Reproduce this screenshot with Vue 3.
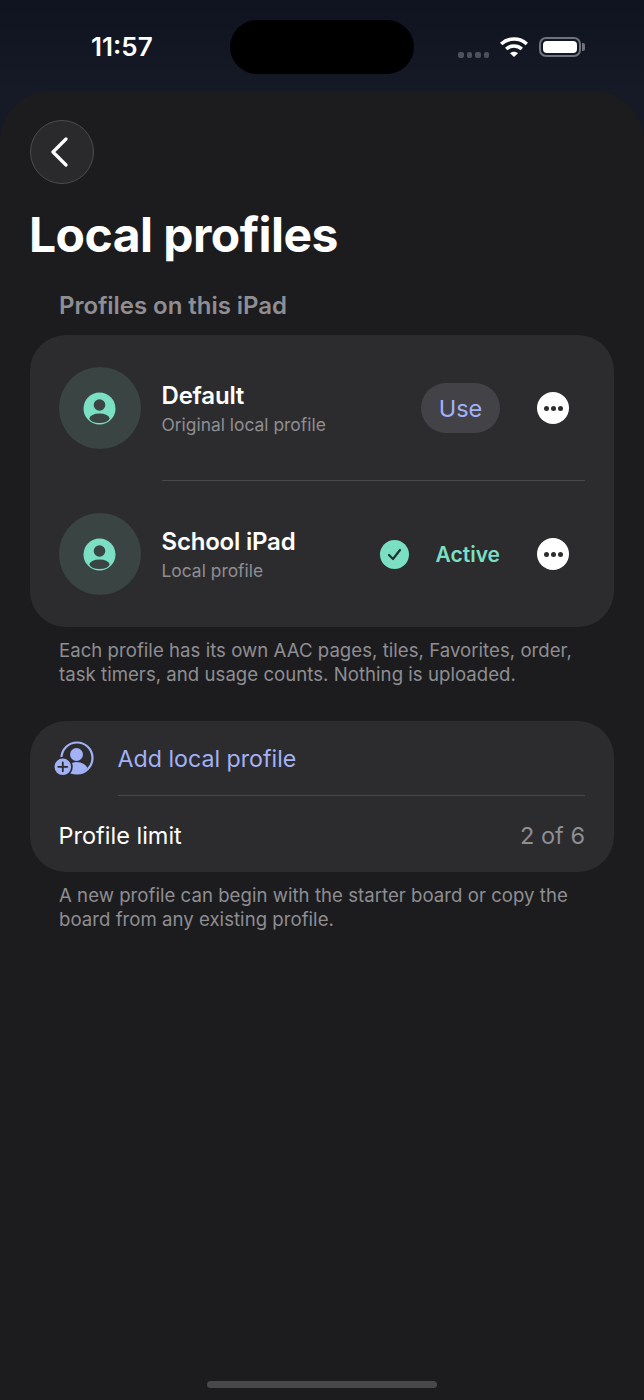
<template>
  <div class="screen">
    <div class="status-bar">
      <span class="time">11:57</span>
      <div class="island"></div>
      <div class="status-icons">
        <div class="signal"><i></i><i></i><i></i><i></i></div>
        <svg class="wifi" width="28" height="20" viewBox="0 0 28 20">
          <path d="M1.200 7C8.500 .4 19.500 .4 26.800 7" fill="none" stroke="#fff" stroke-width="3.600" />
          <path d="M6.200 12C10.700 8 17.300 8 21.800 12" fill="none" stroke="#fff" stroke-width="3.600" />
          <path d="M10 16.300c2.400-2 5.600-2 8 0l-4 3.700z" fill="#fff" />
        </svg>
        <div class="battery"><div class="battery-fill"></div></div>
        <div class="battery-cap"></div>
      </div>
    </div>

    <div class="sheet">
      <button class="back-btn">
        <svg width="22" height="30" viewBox="0 0 22 30">
          <path d="M17 2 4 15l13 13" fill="none" stroke="#fff" stroke-width="3.200" stroke-linecap="round" stroke-linejoin="round" />
        </svg>
      </button>

      <h1 class="title">Local profiles</h1>
      <div class="section-label">Profiles on this iPad</div>

      <div class="card profiles">
        <div class="profile" v-for="p in profiles" :key="p.name">
          <div class="avatar">
            <svg width="33" height="33" viewBox="0 0 33 33">
              <circle cx="16.500" cy="16.500" r="16" fill="#7adfc3" />
              <circle cx="16.500" cy="13" r="5.800" fill="#3a4443" />
              <ellipse cx="16.500" cy="26.300" rx="10" ry="4.800" fill="#3a4443" />
            </svg>
          </div>
          <div class="profile-text">
            <div class="profile-name">{{ p.name }}</div>
            <div class="profile-sub">{{ p.sub }}</div>
          </div>
          <template v-if="p.active">
            <svg class="check" width="29" height="29" viewBox="0 0 29 29">
              <circle cx="14.500" cy="14.500" r="14.500" fill="#7adfc3" />
              <path d="M9 15l4 4 7-9" fill="none" stroke="#24302e" stroke-width="2.200" stroke-linecap="round" stroke-linejoin="round" />
            </svg>
            <span class="active-label">Active</span>
          </template>
          <button v-else class="use-btn">Use</button>
          <div class="more"><i></i><i></i><i></i></div>
        </div>
      </div>
      <p class="note">Each profile has its own AAC pages, tiles, Favorites, order, task timers, and usage counts. Nothing is uploaded.</p>

      <div class="card add-card">
        <div class="add-row">
          <svg class="add-icon" width="42" height="36" viewBox="0 0 42 36">
            <circle cx="24" cy="17" r="15.500" fill="none" stroke="#a3b1f7" stroke-width="2.200" />
            <circle cx="23.500" cy="13.500" r="6.500" fill="#a3b1f7" />
            <path d="M14 29c1-5 5-8 9.500-8 5 0 9 2.500 11 6-3 3.500-7 5.500-11 5.500-4 0-7-1-9.500-3.500z" fill="#a3b1f7" />
            <circle cx="9.800" cy="25.800" r="10" fill="#2c2c2e" />
            <circle cx="9.800" cy="25.800" r="8.300" fill="#a3b1f7" />
            <path d="M9.800 21.300v9M5.300 25.800h9" stroke="#2c2c2e" stroke-width="1.800" stroke-linecap="round" />
          </svg>
          <span class="add-label">Add local profile</span>
        </div>
        <div class="limit-row">
          <span>Profile limit</span>
          <span class="limit-value">2 of 6</span>
        </div>
      </div>
      <p class="note">A new profile can begin with the starter board or copy the board from any existing profile.</p>

      <div class="home-indicator"></div>
    </div>
  </div>
</template>

<script setup>
const profiles = [
  { name: 'Default', sub: 'Original local profile', active: false },
  { name: 'School iPad', sub: 'Local profile', active: true },
]
</script>

<style>
body {
  margin: 0;
  background: #141824;
}
</style>

<style scoped>
.screen {
  width: 644px;
  height: 1400px;
  display: flex;
  flex-direction: column;
  overflow: hidden;
  background: #161a27;
  font-family: Inter, 'Liberation Sans', sans-serif;
  color: #fff;
}

.status-bar {
  height: 91px;
  flex-shrink: 0;
  display: flex;
  position: relative;
  background: linear-gradient(#0f1320, #161a27);
}

.time {
  margin: 31px 0 0 91px;
  font-size: 26px;
  line-height: 32px;
  font-weight: 600;
}

.island {
  position: absolute;
  left: 230px;
  top: 20px;
  width: 184px;
  height: 54px;
  border-radius: 27px;
  background: #000;
}

.status-icons {
  margin-left: auto;
  margin-right: 59px;
  margin-top: 37px;
  display: flex;
  align-items: flex-start;
}

.signal {
  display: flex;
  gap: 3px;
  margin-top: 15px;
  margin-right: 11px;
}

.signal i {
  width: 5.500px;
  height: 5.500px;
  border-radius: 2px;
  background: #4e515c;
}

.wifi {
  margin-right: 11px;
}

.battery {
  width: 42px;
  height: 20px;
  box-sizing: border-box;
  border: 2px solid #6f727c;
  border-radius: 7px;
  padding: 2px;
}

.battery-fill {
  height: 100%;
  border-radius: 4px;
  background: #fff;
}

.battery-cap {
  width: 3px;
  height: 8px;
  margin: 6px 0 0 1px;
  border-radius: 0 2px 2px 0;
  background: #6f727c;
}

.sheet {
  flex: 1;
  padding: 29px 30px 0;
  display: flex;
  flex-direction: column;
  position: relative;
  background: #1c1c1e;
  border-radius: 50px 50px 0 0;
}

.back-btn {
  width: 64px;
  height: 64px;
  padding: 0;
  border-radius: 50%;
  border: 1px solid #4b4b4d;
  background: #2a2a2c;
  display: flex;
  align-items: center;
  justify-content: center;
}

.back-btn svg {
  margin-right: 5px;
}

.title {
  margin: 22px 0 0 -1px;
  font-size: 48px;
  line-height: 58px;
  font-weight: 700;
  letter-spacing: -0.55px;
}

.section-label {
  margin: 27px 0 0 29px;
  font-size: 24px;
  line-height: 30px;
  font-weight: 600;
  letter-spacing: -0.05px;
  color: #8e8e93;
}

.card {
  background: #2c2c2e;
  border-radius: 36px;
}

.profiles {
  margin-top: 14px;
  padding: 0 29px 0 28.500px;
}

.profile {
  height: 146px;
  display: flex;
  align-items: center;
  position: relative;
}

.profile + .profile::before {
  content: '';
  position: absolute;
  left: 103.500px;
  right: 0;
  top: -1px;
  height: 1px;
  background: #48484a;
}

.avatar {
  width: 82px;
  height: 82px;
  border-radius: 50%;
  background: #3a4443;
  display: flex;
  align-items: center;
  justify-content: center;
  flex-shrink: 0;
}

.profile-text {
  margin-left: 21px;
  padding-top: 3px;
  flex: 1;
}

.profile-name {
  font-size: 24px;
  line-height: 30px;
  font-weight: 600;
  letter-spacing: -0.2px;
}

.profile-sub {
  font-size: 17.400px;
  line-height: 26px;
  color: #8e8e93;
  margin-top: 1px;
}

.use-btn {
  width: 79px;
  height: 50px;
  margin-right: 37px;
  border: none;
  border-radius: 25px;
  background: #424247;
  color: #a3b1f7;
  font-family: inherit;
  font-size: 23.500px;
}

.check {
  margin-right: 27px;
}

.active-label {
  margin-right: 37px;
  font-size: 21px;
  font-weight: 600;
  color: #7adfc3;
}

.more {
  width: 32px;
  height: 32px;
  margin-right: 16px;
  border-radius: 50%;
  background: #fff;
  display: flex;
  align-items: center;
  justify-content: center;
  gap: 2px;
}

.more i {
  width: 5px;
  height: 5px;
  border-radius: 50%;
  background: #2c2c2e;
}

.note {
  margin: 12px 0 0 29px;
  width: 530px;
  font-size: 18.600px;
  line-height: 23.500px;
  letter-spacing: 0.03px;
  color: #8e8e93;
}

.add-card {
  margin-top: 35px;
  padding: 0 29px 0 28.500px;
}

.add-row {
  height: 75px;
  display: flex;
  align-items: center;
  position: relative;
}

.add-row::after {
  content: '';
  position: absolute;
  left: 59.500px;
  right: 0;
  bottom: 0;
  height: 1px;
  background: #48484a;
}

.add-icon {
  margin-left: -6px;
  margin-right: 23px;
  flex-shrink: 0;
}

.add-label {
  font-size: 23.200px;
  color: #a3b1f7;
}

.limit-row {
  height: 76px;
  box-sizing: border-box;
  padding-top: 2px;
  display: flex;
  align-items: center;
  justify-content: space-between;
  font-size: 23.500px;
}

.limit-value {
  color: #8e8e93;
}

.home-indicator {
  position: absolute;
  left: 207px;
  bottom: 12px;
  width: 230px;
  height: 7px;
  border-radius: 4px;
  background: #48484a;
}
</style>
